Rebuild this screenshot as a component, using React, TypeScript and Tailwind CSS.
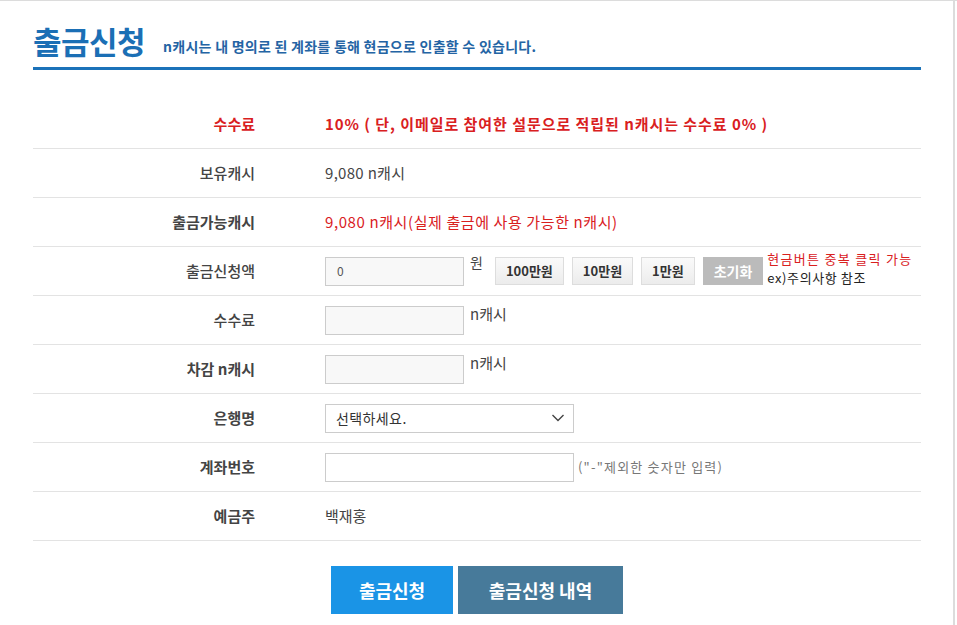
import React from "react";

const font = { fontFamily: '"Noto Sans CJK KR", "Noto Sans", sans-serif' };

function Row({ label, red, bold = true, children }: { label: string; red?: boolean; bold?: boolean; children: React.ReactNode }) {
  return (
    <div className="flex items-center h-[49px] border-b border-[#e3e3e3]">
      <div
        className={`w-[222px] text-right text-[15px] ${bold ? "font-bold" : "font-medium"} ${red ? "text-[#d9201e]" : "text-[#444]"}`}
      >
        {label}
      </div>
      <div className="ml-[70px] flex items-center text-[15px] text-[#444]">{children}</div>
    </div>
  );
}

function AmountBtn({ children }: { children: React.ReactNode }) {
  return (
    <button className="h-[28px] px-[10px] border border-[#ddd] bg-gradient-to-b from-[#fafafa] to-[#ececec] text-[13px] font-bold text-[#333]">
      {children}
    </button>
  );
}

export default function App() {
  return (
    <div className="min-h-screen bg-white border-t border-[#dcdcdc]" style={font}>
      <div className="w-[955px] border-r-2 border-[#dcdcdc] min-h-[624px] pl-[33px] pr-[32px]">
        {/* header */}
        <div className="flex items-end pt-[20px] pb-[6px] border-b-[3px] border-[#1b72b9]">
          <h1 className="text-[31px] leading-[40px] font-bold text-[#1b6fb5] tracking-[-0.5px]">출금신청</h1>
          <p className="ml-[18px] mb-[4px] text-[14px] font-bold text-[#2464a4] tracking-[0.25px]">
            n캐시는 내 명의로 된 계좌를 통해 현금으로 인출할 수 있습니다.
          </p>
        </div>

        <div className="mt-[30px]">
          <Row label="수수료" red>
            <span className="font-bold text-[#d9201e] tracking-[0.95px]">10% ( 단, 이메일로 참여한 설문으로 적립된 n캐시는 수수료 0% )</span>
          </Row>
          <Row label="보유캐시" bold={false}>
            <span className="tracking-[0.3px]">9,080 n캐시</span>
          </Row>
          <Row label="출금가능캐시">
            <span className="text-[#d9201e] tracking-[0.6px]">9,080 n캐시(실제 출금에 사용 가능한 n캐시)</span>
          </Row>
          <Row label="출금신청액" bold={false}>
            <div className="w-[139px] h-[29px] border border-[#ccc] bg-[#f8f8f8] flex items-center pl-[11px] text-[12px] text-[#555]">0</div>
            <span className="ml-[6px] self-start -mt-[3px] text-[14px]">원</span>
            <div className="ml-[12px] flex gap-[8px]">
              <AmountBtn>100만원</AmountBtn>
              <AmountBtn>10만원</AmountBtn>
              <AmountBtn>1만원</AmountBtn>
              <button className="h-[28px] px-[11px] bg-[#bbbbbb] text-[14px] font-bold text-white">초기화</button>
            </div>
            <div className="ml-[4px] flex flex-col text-[13px] leading-[19px] tracking-[1.3px] -mt-[6px]">
              <span className="text-[#d9201e]">현금버튼 중복 클릭 가능</span>
              <span className="text-[#222] tracking-[0.6px]">ex)주의사항 참조</span>
            </div>
          </Row>
          <Row label="수수료" bold={false}>
            <div className="w-[139px] h-[29px] border border-[#ccc] bg-[#f8f8f8]" />
            <span className="ml-[6px] self-start -mt-[3px]">n캐시</span>
          </Row>
          <Row label="차감 n캐시">
            <div className="w-[139px] h-[29px] border border-[#ccc] bg-[#f8f8f8]" />
            <span className="ml-[6px] self-start -mt-[3px]">n캐시</span>
          </Row>
          <Row label="은행명">
            <div className="w-[249px] h-[29px] border border-[#ccc] bg-white flex items-center justify-between pl-[10px] pr-[8px]">
              <span className="text-[14px] text-[#333] tracking-[0.4px]">선택하세요.</span>
              <svg width="14" height="14" viewBox="0 0 14 14" fill="none" stroke="#444" strokeWidth="1.4">
                <polyline points="1.5,4 7,9.5 12.5,4" />
              </svg>
            </div>
          </Row>
          <Row label="계좌번호">
            <div className="w-[249px] h-[29px] border border-[#ccc] bg-white" />
            <span className="ml-[4px] text-[13px] text-[#777] tracking-[1.2px]">("-"제외한 숫자만 입력)</span>
          </Row>
          <Row label="예금주">
            <span>백재홍</span>
          </Row>
        </div>

        <div className="flex justify-center gap-[5px] mt-[25px]">
          <button className="w-[122px] h-[48px] bg-[#1a94e6] text-white text-[18px] font-bold">출금신청</button>
          <button className="w-[165px] h-[48px] bg-[#477a9a] text-white text-[18px] font-bold">출금신청 내역</button>
        </div>
      </div>
    </div>
  );
}
